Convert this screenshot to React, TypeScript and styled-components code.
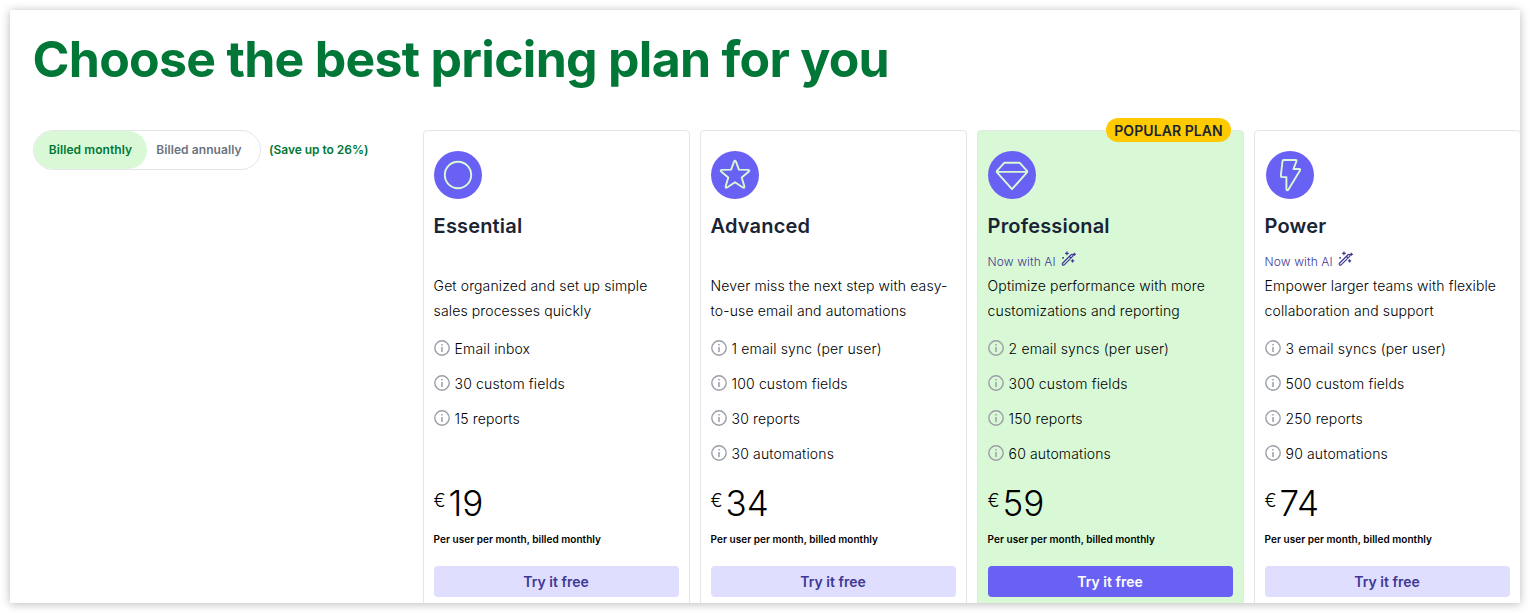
import React from "react";
import styled, { createGlobalStyle } from "styled-components";

const GlobalStyle = createGlobalStyle`
  * { box-sizing: border-box; }
  body { margin: 0; background: #fff; font-family: Inter, "Liberation Sans", sans-serif; overflow: hidden; }
  h1, h2, p, ul { margin: 0; padding: 0; }
`;

const Page = styled.div`
  height: 613px;
  padding: 10px;
`;

const Panel = styled.main`
  height: 593px;
  padding: 19px 0 0 22.5px;
  overflow: hidden;
  background: #fff;
  box-shadow: 0 1px 9px rgba(0, 0, 0, 0.28);
`;

const Title = styled.h1`
  height: 101px;
  font-size: 50px;
  line-height: 60px;
  font-weight: 700;
  letter-spacing: -0.73px;
  color: #017737;
  white-space: nowrap;
`;

const Content = styled.div`
  display: flex;
  align-items: flex-start;
  padding-left: 0.5px;
`;

const Billing = styled.div`
  flex: 0 0 390px;
  display: flex;
  align-items: center;
  gap: 8px;
`;

const Toggle = styled.div`
  display: flex;
  width: 228px;
  height: 40px;
  border: 1px solid #e4e5e8;
  border-radius: 20px;
`;

const ToggleOption = styled.button<{ $active?: boolean }>`
  width: ${(p) => (p.$active ? "113px" : "104px")};
  padding: 0;
  border: 0;
  border-radius: 19px;
  background: ${(p) => (p.$active ? "#d9f9d6" : "transparent")};
  color: ${(p) => (p.$active ? "#017737" : "#6b7280")};
  font: 600 12px/38px Inter, sans-serif;
  letter-spacing: 0.08px;
  white-space: nowrap;
`;

const Saving = styled.span`
  margin-top: -2px;
  font-size: 12px;
  font-weight: 600;
  letter-spacing: -0.03px;
  color: #017737;
  white-space: nowrap;
`;

const Plans = styled.div`
  display: flex;
  gap: 10px;
`;

const Card = styled.section<{ $popular?: boolean }>`
  position: relative;
  flex: 0 0 267px;
  height: 490px;
  padding: 20px 10px 0;
  border: 1px solid #e4e5e8;
  border-radius: 4px;
  background: ${(p) => (p.$popular ? "#d9f9d6" : "#fff")};
`;

const Badge = styled.span`
  position: absolute;
  top: -13px;
  right: 12px;
  width: 125px;
  height: 24px;
  border-radius: 12px;
  background: #ffcb00;
  color: #192435;
  font-size: 14px;
  font-weight: 600;
  letter-spacing: 0.08px;
  line-height: 26px;
  text-align: center;
  white-space: nowrap;
`;

const PlanIcon = styled.svg<{ $offset: number }>`
  display: block;
  width: 48px;
  height: 48px;
  margin-left: ${(p) => p.$offset}px;
  fill: none;
  stroke: #d9f9d6;
  stroke-width: 1.9;
  stroke-linejoin: round;
`;

const PlanName = styled.h2`
  margin: 13px 0 0 -0.4px;
  font-size: 20px;
  line-height: 28px;
  font-weight: 600;
  letter-spacing: 0.17px;
  color: #192435;
`;

const AiNote = styled.div`
  display: flex;
  gap: 5px;
  height: 33px;
  margin-left: -0.4px;
  padding-top: 9px;
  font-size: 12px;
  line-height: 26px;
  font-weight: 300;
  letter-spacing: 0.1px;
  color: #3d3894;

  svg {
    margin-top: 2px;
  }
`;

const Description = styled.p`
  height: 58px;
  margin-left: -0.4px;
  font-size: 14px;
  line-height: 25px;
  letter-spacing: 0.12px;
  font-weight: 300;
  color: #000;
  white-space: pre-line;
`;

const Features = styled.ul`
  height: 148px;
  list-style: none;
`;

const Feature = styled.li`
  display: flex;
  align-items: center;
  gap: 4.6px;
  height: 35px;
  font-size: 14px;
  font-weight: 300;
  letter-spacing: 0.14px;
  color: #000;
`;

const InfoSvg = styled.svg`
  flex: none;
  margin-top: -2px;
`;

const Price = styled.div`
  display: flex;
  height: 48px;
  margin-left: -0.5px;
  color: #000;
  font-weight: 300;
`;

const Currency = styled.span`
  width: 15px;
  font-size: 18px;
  line-height: 43px;
`;

const Amount = styled.span`
  font-size: 35px;
  line-height: 49px;
`;

const Terms = styled.p`
  height: 39px;
  margin-left: -0.4px;
  font-size: 10px;
  line-height: 25px;
  font-weight: 600;
  letter-spacing: 0.04px;
  color: #000;
`;

const TryButton = styled.button<{ $primary?: boolean }>`
  display: block;
  width: 245px;
  height: 31px;
  padding: 0 1px 0 0;
  border: 0;
  border-radius: 4px;
  background: ${(p) => (p.$primary ? "#6961f3" : "#e0deff")};
  color: ${(p) => (p.$primary ? "#fff" : "#3d3894")};
  font: 600 14px/31px Inter, sans-serif;
`;

const InfoIcon = () => (
  <InfoSvg width="16" height="16" viewBox="0 0 16 16" fill="none">
    <circle cx="8" cy="8" r="7.2" stroke="#9a9ea6" strokeWidth="1.4" />
    <path d="M8 7v5M8 4v1.6" stroke="#9a9ea6" strokeWidth="1.5" />
  </InfoSvg>
);

const WandIcon = () => (
  <svg width="15.5" height="15.5" viewBox="0 0 17 17" fill="none" stroke="#3d3894" strokeWidth="1.3">
    <path d="M1.7 13.4 11 4.1q1-.8 1.8 0t0 1.8L3.5 15.2q-1 .8-1.8 0t0-1.8ZM9.2 5.9 11 7.7" />
    <path d="M6.5.6v4M4.5 2.6h4M14.6 1.9v3.4M12.9 3.6h3.4M12.7 9v3.6M10.9 10.8h3.6M2.3 6.6v1.8M1.4 7.5h1.8" />
  </svg>
);

const shapes = {
  circle: <circle cx="24" cy="24" r="13.2" />,
  star: (
    <path d="M23.1 10.4q.9-1.5 1.8 0l3 8.2 9.4.3q1.7.3.6 1.6l-7.2 5.9 2.7 9q.2 1.9-1.5 1.1L24 31.3l-7.9 5.2q-1.7.8-1.5-1.1l2.7-9-7.2-5.9q-1.1-1.3.6-1.6l9.4-.3Z" />
  ),
  diamond: <path d="M16.2 11.8h15.6L39.2 20.2v1L24 38.2 8.8 21.2v-1ZM9 20.9h30" />,
  bolt: (
    <path d="M17.6 9h12.2q1 0 .7 1l-3 8h5.8q1.3.2.7 1.4L22.3 38.7q-1.7 1.4-1.9-.6v-12h-4.7q-1-.1-.9-1.2l1.7-14.8q.2-1.1 1.1-1.1Z" />
  ),
};

interface Plan {
  name: string;
  icon: keyof typeof shapes;
  iconOffset: number;
  ai?: boolean;
  popular?: boolean;
  description: string;
  features: string[];
  price: number;
}

const plans: Plan[] = [
  {
    name: "Essential",
    icon: "circle",
    iconOffset: 0,
    description: "Get organized and set up simple\nsales processes quickly",
    features: ["Email inbox", "30 custom fields", "15 reports"],
    price: 19,
  },
  {
    name: "Advanced",
    icon: "star",
    iconOffset: 0.2,
    description: "Never miss the next step with easy-\nto-use email and automations",
    features: ["1 email sync (per user)", "100 custom fields", "30 reports", "30 automations"],
    price: 34,
  },
  {
    name: "Professional",
    icon: "diamond",
    iconOffset: 0.45,
    ai: true,
    popular: true,
    description: "Optimize performance with more\ncustomizations and reporting",
    features: ["2 email syncs (per user)", "300 custom fields", "150 reports", "60 automations"],
    price: 59,
  },
  {
    name: "Power",
    icon: "bolt",
    iconOffset: 0.7,
    ai: true,
    description: "Empower larger teams with flexible\ncollaboration and support",
    features: ["3 email syncs (per user)", "500 custom fields", "250 reports", "90 automations"],
    price: 74,
  },
];

const PlanCard = ({ plan }: { plan: Plan }) => (
  <Card $popular={plan.popular}>
    {plan.popular && <Badge>POPULAR PLAN</Badge>}
    <PlanIcon viewBox="0 0 48 48" $offset={plan.iconOffset}>
      <circle cx="24" cy="24" r="24" fill="#6961f3" stroke="none" />
      {shapes[plan.icon]}
    </PlanIcon>
    <PlanName>{plan.name}</PlanName>
    <AiNote>
      {plan.ai && (
        <>
          Now with AI
          <WandIcon />
        </>
      )}
    </AiNote>
    <Description>{plan.description}</Description>
    <Features>
      {plan.features.map((f) => (
        <Feature key={f}>
          <InfoIcon />
          {f}
        </Feature>
      ))}
    </Features>
    <Price>
      <Currency>€</Currency>
      <Amount>{plan.price}</Amount>
    </Price>
    <Terms>Per user per month, billed monthly</Terms>
    <TryButton $primary={plan.popular}>Try it free</TryButton>
  </Card>
);

export default function App() {
  return (
    <Page>
      <GlobalStyle />
      <Panel>
        <Title>Choose the best pricing plan for you</Title>
        <Content>
          <Billing>
            <Toggle>
              <ToggleOption $active>Billed monthly</ToggleOption>
              <ToggleOption>Billed annually</ToggleOption>
            </Toggle>
            <Saving>(Save up to 26%)</Saving>
          </Billing>
          <Plans>
            {plans.map((plan) => (
              <PlanCard key={plan.name} plan={plan} />
            ))}
          </Plans>
        </Content>
      </Panel>
    </Page>
  );
}
